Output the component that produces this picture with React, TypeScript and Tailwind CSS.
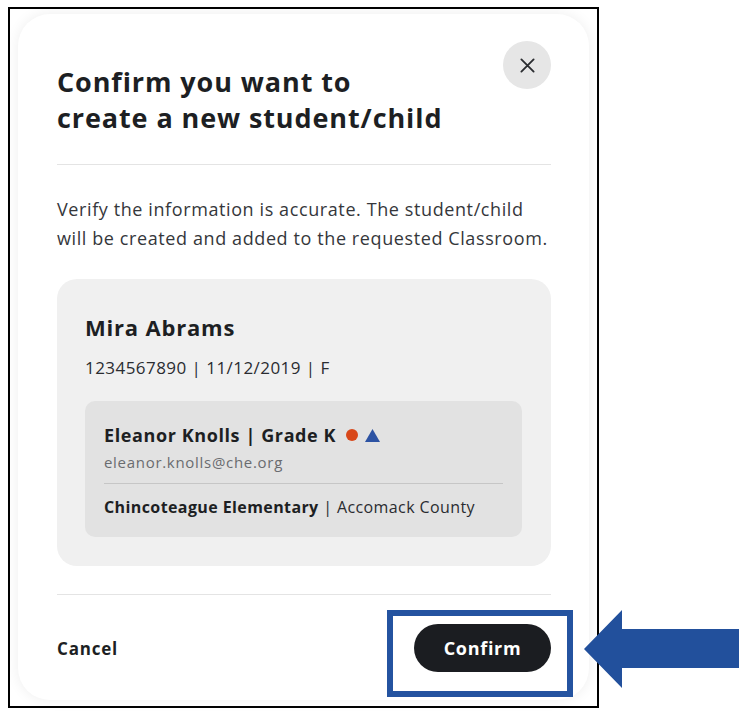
import React from 'react';

const font = { fontFamily: '"Open Sans", "Noto Sans", sans-serif' };

const CloseIcon = () => (
  <svg width="21" height="21" viewBox="0 0 24 24" fill="none" stroke="#2a2c30" strokeWidth="2.1" strokeLinecap="round">
    <path d="M5 5l14 14M19 5L5 19" />
  </svg>
);

// big annotation arrow pointing left at the Confirm button
const Arrow = () => (
  <svg width="155" height="78" viewBox="0 0 155 78">
    <polygon points="0,39 38,0 38,19 155,19 155,58 38,58 38,78" fill="#22509c" />
  </svg>
);

export default function App() {
  return (
    <div className="relative min-h-screen bg-white text-[#1d1f23]" style={font}>
      <div className="ml-[8px] mt-[7px] w-[591px] h-[701px] border-2 border-black pl-[8px] pr-[8px] pt-[5px] pb-[6px]">
        <div className="h-full rounded-[32px] bg-white shadow-[0_0_14px_rgba(0,0,0,0.07)] pl-[39px] pr-[38px] flex flex-col">
          {/* header */}
          <div className="flex items-start justify-between pt-[27px]">
            <h1 className="mt-[23px] text-[27px] leading-[36px] font-bold tracking-[0.9px]">
              Confirm you want to
              <br />
              create a new student/child
            </h1>
            <button className="w-[48px] h-[48px] rounded-full bg-[#e6e6e6] flex items-center justify-center">
              <CloseIcon />
            </button>
          </div>

          <div className="mt-[28px] h-px bg-[#e4e4e4]" />

          <p className="mt-[30px] text-[18px] leading-[29px] text-[#35373b] tracking-[0.6px] whitespace-nowrap">
            Verify the information is accurate. The student/child
            <br />
            will be created and added to the requested Classroom.
          </p>

          {/* student card */}
          <div className="mt-[26px] rounded-[20px] bg-[#f0f0f0] pl-[28px] pr-[29px] pt-[34px] pb-[29px]">
            <div className="text-[22px] leading-[28px] font-bold tracking-[0.8px]">Mira Abrams</div>
            <div className="mt-[15px] text-[17px] leading-[24px] text-[#2a2c30] tracking-[0.45px]">1234567890 | 11/12/2019 | F</div>

            <div className="mt-[21px] rounded-[10px] bg-[#e2e2e2] pl-[19px] pr-[19px] pt-[22px] pb-[19px]">
              <div className="flex items-center text-[18px] leading-[24px] font-bold tracking-[0.6px]">
                <span>Eleanor Knolls | Grade K</span>
                <span className="ml-[10px] inline-block w-[12px] h-[12px] rounded-full bg-[#d8481a]" />
                <svg className="ml-[7px]" width="15" height="13" viewBox="0 0 15 13">
                  <polygon points="7.5,0 15,13 0,13" fill="#2d53a3" />
                </svg>
              </div>
              <div className="mt-[4px] text-[15px] leading-[22px] text-[#6a6c70] tracking-[0.7px]">eleanor.knolls@che.org</div>
              <div className="mt-[10px] h-px bg-[#c6c6c6]" />
              <div className="mt-[12px] text-[16px] leading-[22px] text-[#2a2c30] tracking-[0.4px]">
                <span className="font-bold text-[#1d1f23]">Chincoteague Elementary</span> | Accomack County
              </div>
            </div>
          </div>

          <div className="mt-[28px] h-px bg-[#e4e4e4]" />

          {/* footer */}
          <div className="mt-[29px] flex items-center justify-between">
            <button className="mt-[2px] text-[17px] font-bold text-[#1d1f23] tracking-[0.8px]">Cancel</button>
            <button className="w-[137px] h-[48px] rounded-full bg-[#1b1d21] text-white text-[18px] font-bold tracking-[0.7px]">
              Confirm
            </button>
          </div>
        </div>
      </div>

      {/* annotation overlays */}
      <div className="absolute left-[387px] top-[603px] w-[186px] h-[87px] border-[6px] border-[#2453a0]" />
      <div className="absolute left-[584px] top-[603px]">
        <Arrow />
      </div>
    </div>
  );
}
